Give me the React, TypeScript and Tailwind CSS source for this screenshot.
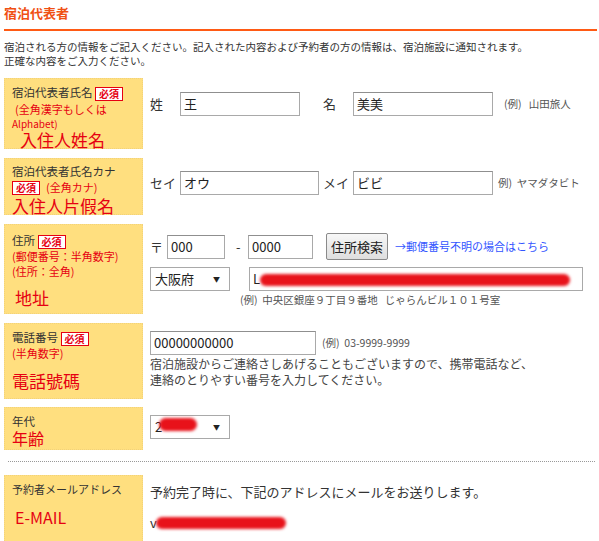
import * as React from "react";

const Required = () => (
  <span className="inline-block border border-[#e60012] bg-white px-[3px] text-[10px] leading-[12px] font-bold text-[#e60012] align-middle">
    必須
  </span>
);

const Scribble = ({ className }: { className: string }) => (
  <span className={`absolute rounded-full bg-[#e8121a] blur-[1.5px] ${className}`} />
);

function TextBox({ value, className }: { value?: string; className: string }) {
  return (
    <div
      className={`flex h-[24px] items-center border border-[#a9a9a9] border-t-[#8f8f8f] bg-white px-[3px] text-[13px] text-[#222] ${className}`}
    >
      {value}
    </div>
  );
}

function SelectBox({ children, className }: { children?: React.ReactNode; className: string }) {
  return (
    <div
      className={`relative flex h-[24px] items-center justify-between border border-[#a9a9a9] bg-white pl-[4px] pr-[9px] text-[13px] text-[#222] ${className}`}
    >
      <span className="relative">{children}</span>
      <span className="text-[7px] text-[#222]">▼</span>
    </div>
  );
}

function Label({ children, className }: { children: React.ReactNode; className: string }) {
  return (
    <div className={`w-[139px] shrink-0 border border-dotted border-[#f2d27a] bg-[#ffdf7f] pl-[7px] ${className}`}>
      {children}
    </div>
  );
}

export default function App() {
  return (
    <div
      className="h-[541px] w-[599px] overflow-hidden bg-white text-[#333]"
      style={{ fontFamily: '"Noto Sans CJK JP", "Noto Sans", sans-serif' }}
    >
      <div className="px-[4px] pt-[3px]">
        <h2 className="text-[13px] font-bold leading-[20px] text-[#f05014]">宿泊代表者</h2>
        <div className="mt-[6px] h-[2px] w-[593px] bg-[#ff5a14]" />
        <p className="mt-[9px] text-[10.5px] leading-[14px] text-[#333]">
          宿泊される方の情報をご記入ください。記入された内容および予約者の方の情報は、宿泊施設に通知されます。
          <br />
          正確な内容をご入力ください。
        </p>

        {/* 氏名 */}
        <div className="mt-[10px] flex">
          <Label className="h-[71px] pt-[5px]">
            <div className="text-[11.5px] leading-[16px]">
              宿泊代表者氏名 <Required />
            </div>
            <div className="pl-[3px] text-[11px] leading-[16px] text-[#e60012]">(全角漢字もしくは</div>
            <div className="text-[10px] leading-[13px] text-[#e60012]">Alphabet)</div>
            <div className="pl-[8px] text-[17px] leading-[19px] text-[#e60012]">入住人姓名</div>
          </Label>
          <div className="flex items-center pt-[14px] self-start text-[13px]">
            <span className="ml-[7px] w-[30px]">姓</span>
            <TextBox value="王" className="w-[120px]" />
            <span className="ml-[23px] w-[30px]">名</span>
            <TextBox value="美美" className="w-[140px]" />
            <span className="ml-[11px] text-[10.5px] text-[#555]">(例)&nbsp;&nbsp;&nbsp;山田旅人</span>
          </div>
        </div>

        {/* カナ */}
        <div className="mt-[9px] flex">
          <Label className="h-[57px] pt-[4px]">
            <div className="text-[11.5px] leading-[16px]">宿泊代表者氏名カナ</div>
            <div className="flex h-[17px] items-center text-[11px] text-[#e60012]">
              <Required /> <span className="ml-[6px]">(全角カナ)</span>
            </div>
            <div className="text-[17px] leading-[20px] text-[#e60012]">入住人片假名</div>
          </Label>
          <div className="flex items-center pt-[13px] self-start text-[13px]">
            <span className="ml-[7px] w-[30px]">セイ</span>
            <TextBox value="オウ" className="w-[139px]" />
            <span className="ml-[4px] w-[30px]">メイ</span>
            <TextBox value="ビビ" className="w-[140px]" />
            <span className="ml-[5px] text-[10.5px] text-[#555]">例)&nbsp;&nbsp;ヤマダタビト</span>
          </div>
        </div>

        {/* 住所 */}
        <div className="mt-[9px] flex">
          <Label className="h-[90px] pt-[7px]">
            <div className="text-[11.5px] leading-[16px]">
              住所 <Required />
            </div>
            <div className="text-[11px] leading-[15px] text-[#e60012]">(郵便番号：半角数字)</div>
            <div className="text-[11px] leading-[15px] text-[#e60012]">(住所：全角)</div>
            <div className="mt-[9px] pl-[3px] text-[17px] leading-[20px] text-[#e60012]">地址</div>
          </Label>
          <div className="self-start pt-[9px] text-[13px]">
            <div className="flex items-center">
              <span className="ml-[7px] w-[17px]">〒</span>
              <TextBox value="000" className="w-[58px]" />
              <span className="ml-[11px] w-[12px]">-</span>
              <TextBox value="0000" className="w-[65px]" />
              <div className="ml-[13px] flex h-[27px] items-center rounded-[2px] border border-[#8a8a8a] bg-gradient-to-b from-[#f7f7f7] to-[#dedede] px-[4px] text-[13px] text-[#222]">
                住所検索
              </div>
              <span className="ml-[7px] text-[11px] text-[#3355ff]">→郵便番号不明の場合はこちら</span>
            </div>
            <div className="mt-[7px] flex items-center">
              <SelectBox className="ml-[7px] w-[80px]">大阪府</SelectBox>
              <div className="relative ml-[19px] flex h-[24px] w-[334px] items-center border border-[#a9a9a9] bg-white px-[3px] text-[13px] text-[#222]">
                L
                <Scribble className="left-[10px] top-[6px] h-[12px] w-[310px]" />
              </div>
            </div>
            <div className="ml-[97px] mt-[2px] text-[10.5px] leading-[14px] text-[#555]">
              (例)&nbsp;&nbsp;中央区銀座９丁目９番地&nbsp;&nbsp;&nbsp;じゃらんビル１０１号室
            </div>
          </div>
        </div>

        {/* 電話番号 */}
        <div className="mt-[9px] flex">
          <Label className="h-[76px] pt-[5px]">
            <div className="text-[11.5px] leading-[16px]">
              電話番号 <Required />
            </div>
            <div className="text-[11px] leading-[15px] text-[#e60012]">(半角数字)</div>
            <div className="mt-[10px] text-[17px] leading-[20px] text-[#e60012]">電話號碼</div>
          </Label>
          <div className="self-start pt-[8px]">
            <div className="flex items-center">
              <TextBox value="00000000000" className="ml-[7px] w-[166px]" />
              <span className="ml-[6px] text-[10.5px] text-[#555]">(例)&nbsp;&nbsp;03-9999-9999</span>
            </div>
            <div className="ml-[7px] mt-[1px] text-[12px] leading-[16px] text-[#444]">
              宿泊施設からご連絡さしあげることもございますので、携帯電話など、
              <br />
              連絡のとりやすい番号を入力してください。
            </div>
          </div>
        </div>

        {/* 年代 */}
        <div className="mt-[8px] flex">
          <Label className="h-[43px] pt-[5px]">
            <div className="text-[11.5px] leading-[16px]">年代</div>
            <div className="text-[16px] leading-[19px] text-[#e60012]">年齢</div>
          </Label>
          <div className="self-start pt-[8px]">
            <SelectBox className="ml-[7px] w-[80px]">
              2
              <Scribble className="left-[4px] top-[1px] h-[13px] w-[38px]" />
            </SelectBox>
          </div>
        </div>

        <div className="ml-[4px] mt-[11px] w-[587px] border-t border-dotted border-[#999]" />

        {/* メール */}
        <div className="mt-[13px] flex">
          <Label className="h-[70px] pt-[5px]">
            <div className="text-[11px] leading-[16px]">予約者メールアドレス</div>
            <div className="mt-[10px] pl-[3px] text-[16px] leading-[20px] text-[#e60012]">E-MAIL</div>
          </Label>
          <div className="self-start pt-[8px] pl-[7px]">
            <div className="text-[13px] leading-[18px] text-[#333]">
              予約完了時に、下記のアドレスにメールをお送りします。
            </div>
            <div className="relative mt-[14px] h-[16px] w-[140px] text-[13px] leading-[16px] text-[#333]">
              v
              <Scribble className="left-[6px] top-[2px] h-[12px] w-[130px]" />
            </div>
          </div>
        </div>
      </div>
    </div>
  );
}
